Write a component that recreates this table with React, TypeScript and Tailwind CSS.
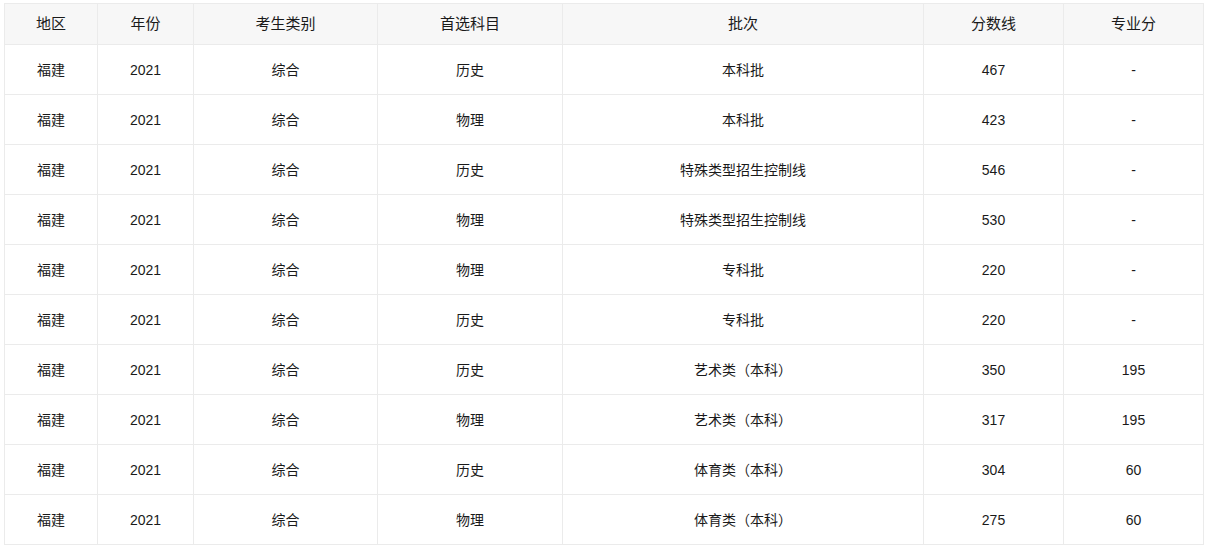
import React from 'react';

type Row = [string, string, string, string, string, string, string];

const headers = ['地区', '年份', '考生类别', '首选科目', '批次', '分数线', '专业分'];
const widths = ['w-[93px]', 'w-[96px]', 'w-[184px]', 'w-[185px]', 'w-[361px]', 'w-[140px]', 'w-[140px]'];

const rows: Row[] = [
    ['福建', '2021', '综合', '历史', '本科批', '467', '-'],
    ['福建', '2021', '综合', '物理', '本科批', '423', '-'],
    ['福建', '2021', '综合', '历史', '特殊类型招生控制线', '546', '-'],
    ['福建', '2021', '综合', '物理', '特殊类型招生控制线', '530', '-'],
    ['福建', '2021', '综合', '物理', '专科批', '220', '-'],
    ['福建', '2021', '综合', '历史', '专科批', '220', '-'],
    ['福建', '2021', '综合', '历史', '艺术类（本科）', '350', '195'],
    ['福建', '2021', '综合', '物理', '艺术类（本科）', '317', '195'],
    ['福建', '2021', '综合', '历史', '体育类（本科）', '304', '60'],
    ['福建', '2021', '综合', '物理', '体育类（本科）', '275', '60'],
];

const App: React.FC = () => {
    return (
        <div className="bg-white min-h-[548px] pt-[3px] px-[4px] font-['Liberation_Sans','Noto_Sans_CJK_SC',sans-serif] text-[#1a1a1a]">
            <table className="w-[1199px] table-fixed border-collapse">
                <colgroup>
                    {widths.map((w, i) => (
                        <col key={i} className={w} />
                    ))}
                </colgroup>
                <thead>
                    <tr className="h-[41px] bg-[#f7f7f7]">
                        {headers.map((h) => (
                            <th key={h} className="border border-[#ebebeb] text-[15px] font-normal text-center">
                                {h}
                            </th>
                        ))}
                    </tr>
                </thead>
                <tbody>
                    {rows.map((r, i) => (
                        <tr key={i} className="h-[50px]">
                            {r.map((c, j) => (
                                <td key={j} className="border border-[#ebebeb] text-[14px] text-center pt-[2px]">
                                    {c}
                                </td>
                            ))}
                        </tr>
                    ))}
                </tbody>
            </table>
        </div>
    );
};

export default App;
